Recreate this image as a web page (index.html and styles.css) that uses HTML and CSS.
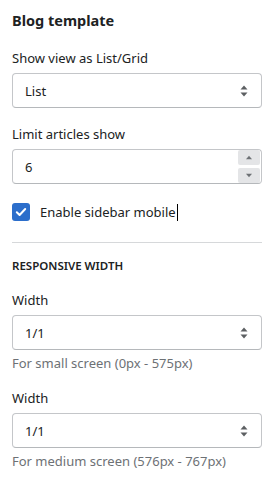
FILE: index.html
```html
<!DOCTYPE html>
<html>
<head>
<meta charset="utf-8">
<link rel="stylesheet" href="styles.css">
</head>
<body>
<div class="panel">
  <h2 class="title">Blog template</h2>
  <div class="field">
    <label class="label">Show view as List/Grid</label>
    <div class="select"><span>List</span>
      <svg class="arrows" width="8" height="12" viewBox="0 0 8 12"><path d="M4 0.5 L7.5 4.5 H0.5 Z M4 11.5 L7.5 7.5 H0.5 Z" fill="#5c5f62"/></svg>
    </div>
  </div>
  <div class="field">
    <label class="label">Limit articles show</label>
    <div class="number"><span>6</span>
      <div class="spin">
        <div class="spin-btn"><svg width="8" height="5" viewBox="0 0 8 5"><path d="M4 0.8 L7 4.2 H1 Z" fill="#6d7175"/></svg></div>
        <div class="spin-btn"><svg width="8" height="5" viewBox="0 0 8 5"><path d="M4 4.2 L7 0.8 H1 Z" fill="#6d7175"/></svg></div>
      </div>
    </div>
  </div>
  <div class="check">
    <span class="box"><svg width="12" height="10" viewBox="0 0 12 10"><path d="M1.8 5.2 L4.6 8 L10.2 2" fill="none" stroke="#fff" stroke-width="2" stroke-linecap="round" stroke-linejoin="round"/></svg></span>
    <span class="check-label">Enable sidebar mobile</span><span class="caret"></span>
  </div>
  <hr class="divider">
  <h3 class="section">RESPONSIVE WIDTH</h3>
  <div class="field">
    <label class="label">Width</label>
    <div class="select"><span>1/1</span>
      <svg class="arrows" width="8" height="12" viewBox="0 0 8 12"><path d="M4 0.5 L7.5 4.5 H0.5 Z M4 11.5 L7.5 7.5 H0.5 Z" fill="#5c5f62"/></svg>
    </div>
    <p class="help">For small screen (0px - 575px)</p>
  </div>
  <div class="field">
    <label class="label">Width</label>
    <div class="select"><span>1/1</span>
      <svg class="arrows" width="8" height="12" viewBox="0 0 8 12"><path d="M4 0.5 L7.5 4.5 H0.5 Z M4 11.5 L7.5 7.5 H0.5 Z" fill="#5c5f62"/></svg>
    </div>
    <p class="help">For medium screen (576px - 767px)</p>
  </div>
</div>
</body>
</html>
```
FILE: styles.css
```css
html, body { margin: 0; padding: 0; background: #fff; }
body { font-family: "Noto Sans", "Open Sans", sans-serif; color: #202223; font-size: 13px; }
.panel { padding: 10px 12px 0 12px; width: 250px; }
.title { font-size: 14.5px; font-weight: 700; margin: 0 0 19px 0; line-height: 20px; }
.field { margin-bottom: 17px; }
.label { display: block; font-size: 13px; line-height: 18px; margin-bottom: 6px; }
.select, .number { box-sizing: border-box; height: 35px; border: 1px solid #c4c6c9; border-bottom-color: #b5b8bb; border-radius: 4px; display: flex; align-items: center; justify-content: space-between; padding: 0 13px 0 12px; font-size: 13px; }
.number { padding-right: 1px; }
.spin { display: flex; flex-direction: column; gap: 3px; }
.spin-btn { width: 22px; height: 15px; background: #e4e5e7; border-radius: 2px; display: flex; align-items: center; justify-content: center; }
.check { display: flex; align-items: center; height: 18px; margin: 19px 0 0 0; }
.box { width: 18px; height: 18px; background: #2c6ecb; border-radius: 3px; display: flex; align-items: center; justify-content: center; margin-right: 10px; }
.check-label { font-size: 13px; }
.caret { display: inline-block; width: 1px; height: 17px; background: #000; margin-left: 1px; }
.divider { border: 0; border-top: 1px solid #d6d8da; margin: 21px 0 15px 0; }
.section { font-size: 11.5px; font-weight: 600; margin: 0 0 17px 0; line-height: 16px; }
.help { margin: 4px 0 0 0; color: #6d7175; font-size: 13px; line-height: 18px; }
```
